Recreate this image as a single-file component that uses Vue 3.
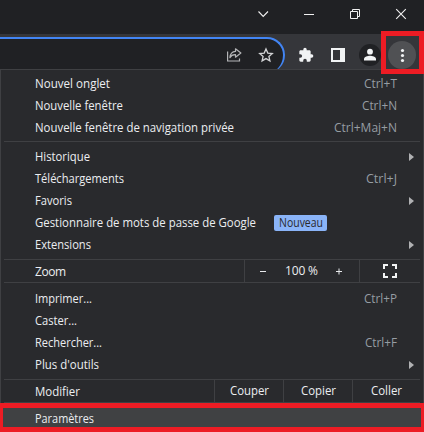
<script setup>
const groups = [
  [
    { label: 'Nouvel onglet', keys: 'Ctrl+T', w: 75, kw: 33 },
    { label: 'Nouvelle fenêtre', keys: 'Ctrl+N', w: 88, kw: 35 },
    { label: 'Nouvelle fenêtre de navigation privée', keys: 'Ctrl+Maj+N', w: 199, kw: 63 },
  ],
  [
    { label: 'Historique', sub: true, w: 55 },
    { label: 'Téléchargements', keys: 'Ctrl+J', w: 89, kw: 31 },
    { label: 'Favoris', sub: true, w: 37 },
    { label: 'Gestionnaire de mots de passe de Google', badge: 'Nouveau', w: 221 },
    { label: 'Extensions', sub: true, w: 56 },
  ],
]
const tools = [
  { label: 'Imprimer...', keys: 'Ctrl+P', w: 57, kw: 33 },
  { label: 'Caster...', w: 42 },
  { label: 'Rechercher...', keys: 'Ctrl+F', w: 67, kw: 32 },
  { label: "Plus d'outils", sub: true, w: 64 },
]
const sections = [
  { items: groups[0] },
  { items: groups[1] },
  { zoom: true },
  { items: tools },
]
const edits = [
  { label: 'Couper', w: 39 },
  { label: 'Copier', w: 35 },
  { label: 'Coller', w: 31 },
]
</script>

<template>
  <div class="window">
    <div class="titlebar">
      <svg width="424" height="34" fill="none" stroke="#f1f1f1">
        <path d="M258.500 11.500l4.700 5 4.800-5" stroke-width="1.1" />
        <path d="M304 14.500h10" />
        <path d="M350.500 11.500h7v7h-7zM352.500 11.500v-2h7v7h-2" />
        <path d="M396.200 9.200l9.600 9.600M405.800 9.200l-9.600 9.600" stroke-width="1.1" />
      </svg>
    </div>
    <div class="toolbar">
      <div class="omnibox">
        <svg width="16" height="16" viewBox="0 0 16 16" fill="none" stroke="#b4b5b7" stroke-width="1.2">
          <path d="M1.600 4.500v9.500h11.900V11.500" />
          <path d="M9.500 1.800l5.400 4.200-5.400 4.200V7.700C6.800 7.600 5 8.600 3.900 10.600c.3-3.400 2.200-5.900 5.600-6.200z" stroke-linejoin="round" />
        </svg>
        <svg class="star" width="16" height="16" viewBox="0 0 16 16" fill="none" stroke="#d2d3d5" stroke-width="1.3">
          <path d="M8 1.900l1.800 4.200 4.500.4-3.400 3 1 4.400L8 11.600l-3.900 2.300 1-4.400-3.400-3 4.500-.4z" />
        </svg>
      </div>
      <svg class="puzzle" width="16" height="16" viewBox="0 0 24 24" fill="#f1f3f4">
        <path d="M20.500 11H19V7c0-1.100-.9-2-2-2h-4V3.500a2.500 2.500 0 0 0-5 0V5H4c-1.100 0-2 .9-2 2v3.800h1.500a2.700 2.700 0 0 1 0 5.400H2V20c0 1.100.9 2 2 2h3.800v-1.500a2.700 2.700 0 0 1 5.400 0V22H17c1.100 0 2-.9 2-2v-4h1.500a2.500 2.500 0 0 0 0-5z" />
      </svg>
      <svg class="panel" width="14" height="14" viewBox="0 0 14 14">
        <path fill="#f1f3f4" fill-rule="evenodd" d="M0 0h14v14H0zM2 2v10h7V2z" />
      </svg>
      <svg class="avatar" width="22" height="22" viewBox="0 0 22 22">
        <circle cx="11" cy="11" r="11" fill="#202124" />
        <circle cx="11" cy="7.700" r="2.900" fill="#f1f3f4" />
        <path d="M5 16.500v-1.600c0-2.100 3.800-3.200 6-3.200s6 1.100 6 3.200v1.600z" fill="#f1f3f4" />
      </svg>
      <svg class="more" width="28" height="28" viewBox="0 0 28 28">
        <circle cx="14" cy="14" r="14" fill="#505154" />
        <circle v-for="y in [9.5, 14.5, 19.5]" :key="y" cx="14.500" :cy="y" r="1.600" fill="#f1f3f4" />
      </svg>
      <div class="mark mark-more"></div>
    </div>

    <div class="menu">
      <template v-for="(s, i) in sections" :key="i">
        <div v-if="s.zoom" class="split">
          <svg class="label" width="180" height="20"><text x="0" y="15" textLength="31">Zoom</text></svg>
          <div class="zoom-cell">
            <svg width="114" height="20">
              <path d="M15 10.500h6M91 10.500h6M94 7.500v6" stroke="#e8eaed" fill="none" />
              <text x="40" y="14" textLength="33">100 %</text>
            </svg>
          </div>
          <div class="full-cell">
            <svg width="14" height="14" fill="none" stroke="#f1f3f4" stroke-width="2">
              <path d="M1 5V1h4M9 1h4v4M13 9v4H9M5 13H1V9" />
            </svg>
          </div>
        </div>
        <div v-else class="group">
          <div v-for="it in s.items" :key="it.label" class="row">
            <svg class="label" :width="it.w + 2" height="20">
              <text x="0" y="14" :textLength="it.w" lengthAdjust="spacingAndGlyphs">{{ it.label }}</text>
            </svg>
            <span v-if="it.badge" class="badge">
              <svg width="46" height="16"><text x="1" y="12" textLength="44" lengthAdjust="spacingAndGlyphs">{{ it.badge }}</text></svg>
            </span>
            <svg v-if="it.keys" class="keys" :width="it.kw" height="20">
              <text x="0" y="14" :textLength="it.kw" lengthAdjust="spacingAndGlyphs">{{ it.keys }}</text>
            </svg>
            <svg v-if="it.sub" class="arrow" width="5" height="8"><path d="M0 0l5 4-5 4z" fill="#b0b1b3" /></svg>
          </div>
        </div>
      </template>
      <div class="split edit">
        <svg class="label" width="150" height="20"><text x="0" y="15" textLength="45" lengthAdjust="spacingAndGlyphs">Modifier</text></svg>
        <div v-for="e in edits" :key="e.label" class="edit-cell">
          <svg :width="e.w" height="20"><text x="0" y="14" :textLength="e.w" lengthAdjust="spacingAndGlyphs">{{ e.label }}</text></svg>
        </div>
      </div>
    </div>
    <div class="settings">
      <svg class="label" width="70" height="19"><text x="0" y="15" textLength="59" lengthAdjust="spacingAndGlyphs">Paramètres</text></svg>
    </div>
  </div>
</template>

<style>
body { margin: 0; background: #202124; overflow: hidden; }
</style>

<style scoped>
.window { width: 424px; height: 432px; background: #202124; overflow: hidden; font-family: "Open Sans", "Noto Sans", sans-serif; font-size: 12px; }
svg { display: block; flex: none; overflow: visible; }
text { fill: #eceef1; font-size: 12px; }
.titlebar { height: 34px; }
.toolbar { position: relative; display: flex; height: 35px; background: #35363a; }
.omnibox { box-sizing: border-box; display: flex; width: 285px; height: 36px; margin-top: 3px; padding: 8px 0 0 226px; border: solid #4285f4; border-width: 2px 2px 0 0; border-radius: 0 18px 18px 0; background: #202124; clip-path: inset(0 0 4px 0); }
.star { margin-left: 16px; }
.puzzle { margin: 13px 0 0 13px; }
.panel { margin: 14px 0 0 17px; }
.avatar { margin: 10px 0 0 14px; }
.more { margin: 7px 0 0 7px; }
.mark { box-sizing: border-box; border: 5px solid #ed1c24; }
.mark-more { position: absolute; z-index: 2; left: 381px; top: -3px; width: 43px; height: 43px; }
.menu { box-sizing: border-box; height: 334px; border: 1px solid #3f4043; border-bottom: 0; background: #292a2d; }
.group { padding: 4px 0; }
.group:first-child { padding: 3px 0 2px; }
.group + .group, .split + .group { border-top: 1px solid #3f4043; margin: 0 3px 0; }
.group + .group { padding: 4px 0 3px; }
.split + .group { padding: 5px 0 3px; }
.row { display: flex; align-items: center; height: 22px; padding-left: 34px; }
.group + .group .row, .split + .group .row { padding-left: 31px; }
.keys { margin-left: auto; margin-right: 26px; }
.group + .group .keys, .split + .group .keys { margin-right: 23px; }
.keys text { fill: #969da3; }
.arrow { margin-left: auto; margin-right: 6px; }
.badge { display: flex; justify-content: center; width: 53px; height: 16px; margin-left: 16px; border-radius: 2px; background: #8ab4f8; }
.badge text { fill: #292a2d; }
.split { display: flex; align-items: center; height: 22px; margin: 0 3px; padding-left: 31px; border-top: 1px solid #3f4043; }
.split > .label { margin-right: auto; }
.zoom-cell, .full-cell, .edit-cell { box-sizing: border-box; display: flex; align-items: center; justify-content: center; height: 22px; border-left: 1px solid #3f4043; }
.zoom-cell { width: 115px; }
.full-cell { width: 61px; }
.edit-cell { width: 69px; }
.edit-cell:last-child { width: 68px; }
.edit { border-bottom: 1px solid #3f4043; }
.settings { box-sizing: border-box; height: 29px; border: solid #ed1c24; border-width: 5px 3px; padding-left: 32px; background: #404143; }
</style>
